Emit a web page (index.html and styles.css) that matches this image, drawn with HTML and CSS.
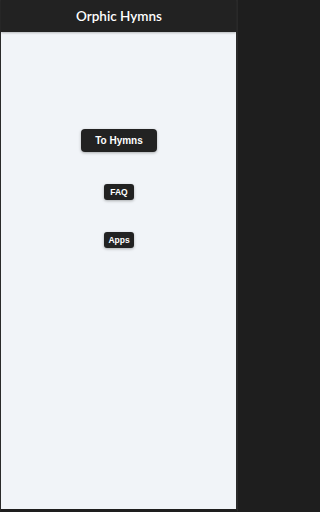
FILE: index.html
```html
<!DOCTYPE html>
<html>
<head>
<meta charset="utf-8">
<link rel="stylesheet" href="styles.css">
</head>
<body>
<div class="frame">
  <header class="topbar"><span class="title">Orphic Hymns</span></header>
  <main class="content">
    <button class="btn btn-large">To Hymns</button>
    <button class="btn btn-small">FAQ</button>
    <button class="btn btn-small">Apps</button>
  </main>
</div>
</body>
</html>
```
FILE: styles.css
```css
html, body {
  margin: 0;
  padding: 0;
  height: 100%;
}
body {
  background: #1e1e1e;
  font-family: Lato, "Open Sans", sans-serif;
}
.frame {
  box-sizing: border-box;
  height: 512px;
  width: 238px;
  border-left: 1px solid #2a2a2a;
  border-right: 2px solid #2a2a2a;
  border-bottom: 3px solid #1e1e1e;
  background: #f1f4f8;
  display: flex;
  flex-direction: column;
}
.topbar {
  height: 32px;
  flex: none;
  background: #222222;
  display: flex;
  align-items: center;
  justify-content: center;
  box-shadow: 0 1px 2px rgba(0,0,0,0.25);
}
.title {
  color: #ffffff;
  font-size: 13.5px;
  font-weight: 600;
  padding-left: 1px;
}
.content {
  flex: 1;
  display: flex;
  flex-direction: column;
  align-items: center;
  padding-top: 97px;
  gap: 32px;
}
.btn {
  background: #222222;
  color: #ffffff;
  border: none;
  font-family: "Liberation Sans", Arial, sans-serif;
  font-weight: 700;
  box-shadow: 0 1px 3px rgba(0,0,0,0.3);
  padding: 0;
  margin-left: 1px;
}
.btn-large {
  width: 76px;
  height: 23px;
  font-size: 10px;
  border-radius: 4px;
}
.btn-small {
  width: 30px;
  height: 16px;
  font-size: 8.5px;
  border-radius: 3px;
}
```
